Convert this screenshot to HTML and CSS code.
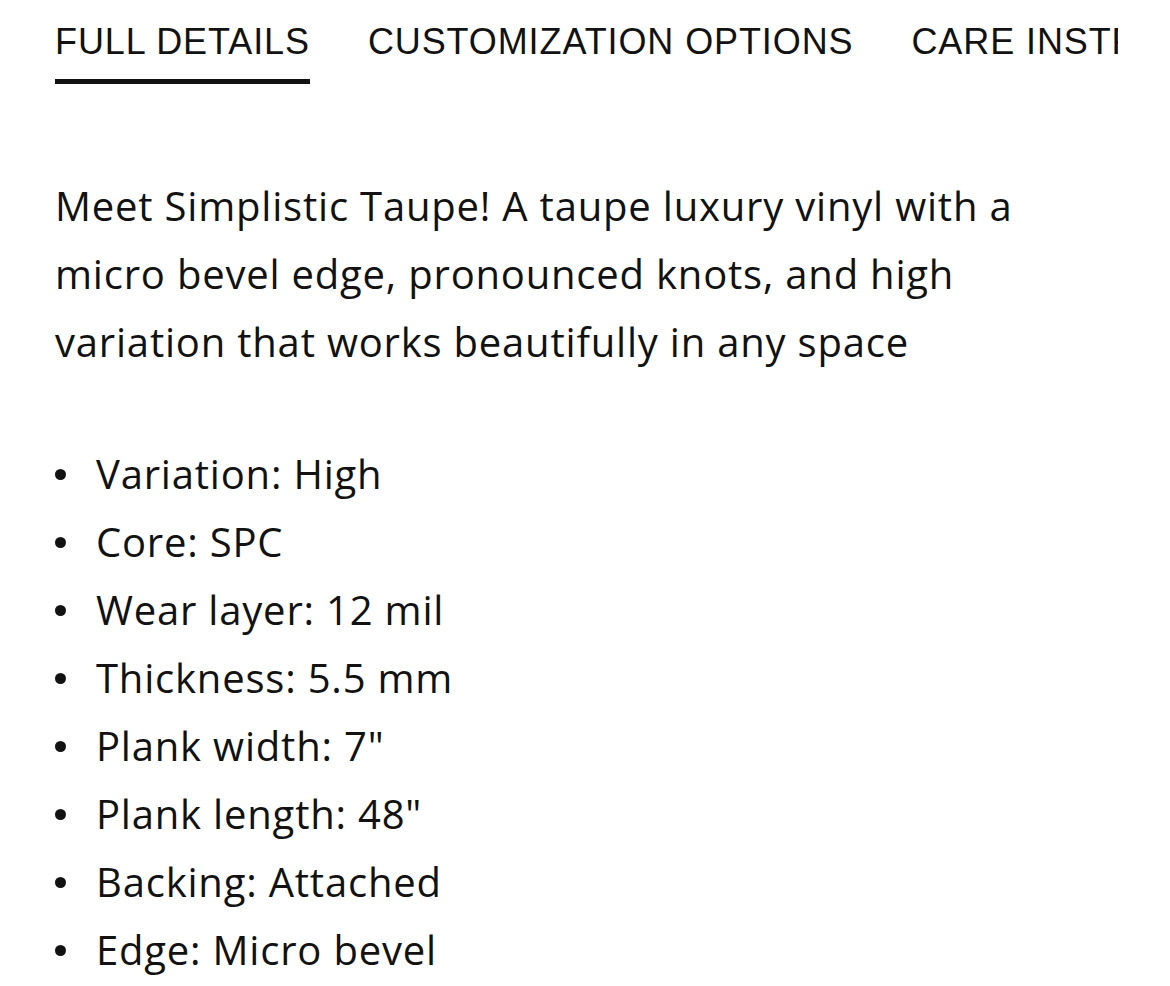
FILE: index.html
```html
<!DOCTYPE html>
<html lang="en">
<head>
  <meta charset="UTF-8"/>
  <meta name="viewport" content="width=device-width, initial-scale=1.0"/>
  <title>Simplistic Taupe - Details</title>
  <link rel="stylesheet" href="styles.css">
</head>
<body>

  <!-- Product tabs -->
  <div class="product-details">
    <nav class="tabs">
      <a class="tab active" href="#">FULL DETAILS</a>
      <a class="tab" href="#">CUSTOMIZATION OPTIONS</a>
      <a class="tab" href="#">CARE INSTRUCTIONS</a>
    </nav>

    <!-- Full details panel -->
    <div class="panel">
      <p class="intro">Meet Simplistic Taupe! A taupe luxury vinyl with a micro bevel edge, pronounced knots, and high variation that works beautifully in any space</p>

      <ul class="specs">
        <li>Variation: High</li>
        <li>Core: SPC</li>
        <li>Wear layer: 12 mil</li>
        <li>Thickness: 5.5 mm</li>
        <li>Plank width: 7"</li>
        <li>Plank length: 48"</li>
        <li>Backing: Attached</li>
        <li>Edge: Micro bevel</li>
      </ul>
    </div>
  </div>

</body>
</html>
```

FILE: styles.css
```css
body {
  margin: 0;
  background: #fff;
  color: #121212;
  font-family: 'Open Sans', 'Noto Sans', sans-serif;
}

.product-details {
  padding: 0 52px 0 55px;
}

.tabs {
  display: flex;
  gap: 58px;
  overflow: hidden;
  white-space: nowrap;
}

.tab {
  padding-top: 21px;
  padding-bottom: 16px;
  border-bottom: 5px solid transparent;
  font-family: 'Liberation Sans', Arial, sans-serif;
  font-size: 36px;
  line-height: 42px;
  letter-spacing: 0.9px;
  color: #121212;
  text-decoration: none;
}

.tab.active {
  border-bottom-color: #121212;
}

.panel {
  padding-top: 88px;
}

.intro {
  margin: 0;
  font-size: 40px;
  line-height: 68px;
  letter-spacing: 0.8px;
}

.specs {
  list-style: none;
  margin: 64px 0 0;
  padding: 0;
}

.specs li {
  display: flex;
  align-items: center;
  gap: 30px;
  font-size: 40px;
  line-height: 68px;
  letter-spacing: 0.8px;
}

.specs li::before {
  content: "";
  width: 11px;
  height: 11px;
  border-radius: 50%;
  background: #121212;
}
```
